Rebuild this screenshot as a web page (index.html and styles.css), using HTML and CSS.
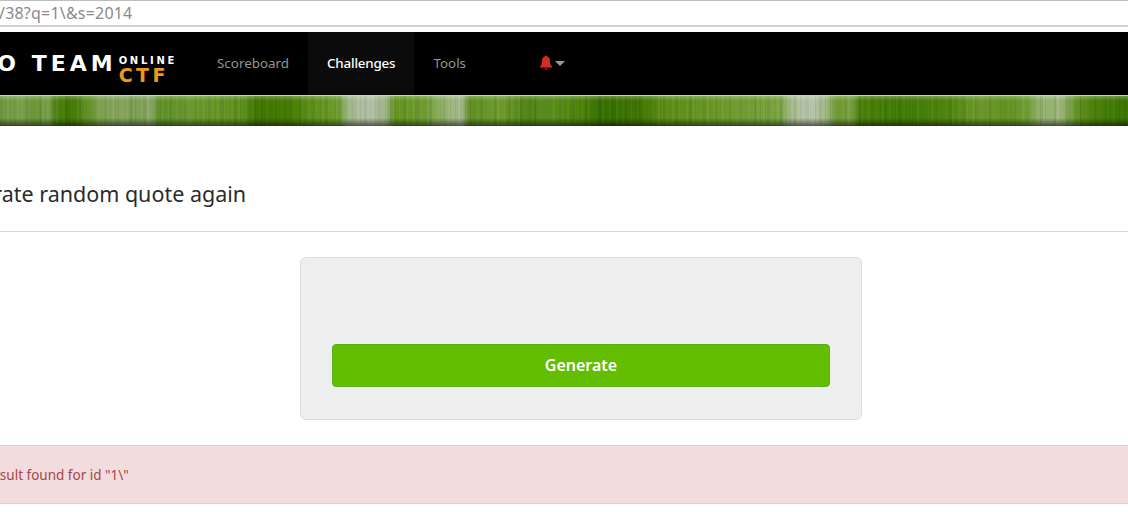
FILE: index.html
```html
<!DOCTYPE html>
<html lang="en">

<head>
    <meta charset="UTF-8">
    <meta name="viewport" content="width=device-width, initial-scale=1.0">
    <title>Generate random quote again</title>

    <link rel="stylesheet" href="styles.css">
</head>

<body class="body">
    <div class="address-bar">
        <span class="address-text">/38?q=1\&amp;s=2014</span>
    </div>

    <nav class="navbar">
        <div class="logo">
            <span class="logo-team">DO TEAM</span>
            <span class="logo-side">
                <span class="logo-online">ONLINE</span>
                <span class="logo-ctf">CTF</span>
            </span>
        </div>
        <ul class="nav-links">
            <li class="nav-item">Scoreboard</li>
            <li class="nav-item active">Challenges</li>
            <li class="nav-item">Tools</li>
        </ul>
        <div class="bell">
            <svg width="14" height="15" viewBox="0 0 14 15">
                <path fill="#d42a2a" d="M7 0.5c.7 0 1.1.5 1.1 1.1C10 2.1 11 3.7 11 6c0 3 .7 4.300 2 5.500v1H1v-1C2.300 10.300 3 9 3 6c0-2.300 1-3.900 2.900-4.400C5.900 1 6.300.5 7 .5z" />
                <path fill="#d42a2a" d="M5.500 13.200h3C8.400 14.100 7.800 14.600 7 14.600s-1.400-.5-1.500-1.400z" />
            </svg>
            <span class="caret"></span>
        </div>
    </nav>

    <div class="stripes"></div>

    <h1 class="page-title">Generate random quote again</h1>

    <div class="well-row">
        <div class="well">
            <button class="btn-generate">Generate</button>
        </div>
    </div>

    <div class="alert">
        <span class="alert-text">No result found for id "1\"</span>
    </div>
</body>

</html>
```

FILE: styles.css
```css
html,
body {
    margin: 0;
    height: 512px;
    overflow: hidden;
    background-color: #fff;
}

body {
    font-family: "Noto Sans", "Open Sans", sans-serif;
    color: #2b2b2b;
}

.address-bar {
    height: 24px;
    border-top: 1px solid #bdbdbd;
    border-bottom: 2px solid #d0d0d0;
    display: flex;
    align-items: center;
    overflow: hidden;
}

.address-text {
    font-size: 16px;
    color: #8a8a8a;
    margin-left: -1px;
    letter-spacing: 0.2px;
}

.navbar {
    margin-top: 5px;
    height: 63px;
    background-color: #000;
    display: flex;
    align-items: stretch;
}

.logo {
    width: 198px;
    flex-shrink: 0;
    display: flex;
    align-items: center;
    justify-content: flex-end;
    padding-right: 21px;
    box-sizing: border-box;
    overflow: hidden;
    white-space: nowrap;
}

.logo-team {
    font-family: "DejaVu Sans", sans-serif;
    font-weight: bold;
    font-size: 22px;
    letter-spacing: 4px;
    color: #fff;
    margin-left: -30px;
}

.logo-side {
    display: flex;
    flex-direction: column;
    margin-left: 2px;
    margin-top: 12px;
    line-height: 1;
}

.logo-online {
    font-family: "DejaVu Sans", sans-serif;
    font-weight: bold;
    font-size: 10px;
    line-height: 11px;
    letter-spacing: 2.700px;
    color: #fff;
}

.logo-ctf {
    font-family: "DejaVu Sans", sans-serif;
    font-weight: bold;
    font-size: 19px;
    line-height: 19px;
    letter-spacing: 3.500px;
    color: #ee9a17;
}

.nav-links {
    list-style: none;
    margin: 0;
    padding: 0;
    display: flex;
}

.nav-item {
    padding: 0 19px 2px;
    display: flex;
    align-items: center;
    font-size: 13.400px;
    color: #949494;
}

.nav-item.active {
    color: #fff;
    font-weight: 500;
    letter-spacing: -0.2px;
    background-color: #0b0b0b;
}

.bell {
    margin-left: 54px;
    display: flex;
    align-items: center;
    gap: 2px;
    padding-bottom: 3px;
}

.caret {
    width: 0;
    height: 0;
    border-left: 5px solid transparent;
    border-right: 5px solid transparent;
    border-top: 5px solid #999;
    margin-top: 2px;
}

.stripes {
    height: 31px;
    border-top: 1px solid #c9d2bd;
    box-sizing: border-box;
    background-image:
        linear-gradient(to bottom, rgba(255, 255, 255, 0.25) 0, rgba(255, 255, 255, 0) 5px, rgba(0, 0, 0, 0) 22px, rgba(0, 0, 0, 0.55) 30px),
        repeating-linear-gradient(to right, rgba(0, 0, 0, 0.05) 0, rgba(0, 0, 0, 0.05) 1px, rgba(0, 0, 0, 0) 1px, rgba(0, 0, 0, 0) 5px),
        repeating-linear-gradient(to right, rgba(255, 255, 255, 0.04) 0, rgba(255, 255, 255, 0.04) 2px, rgba(255, 255, 255, 0) 2px, rgba(255, 255, 255, 0) 7px),
        repeating-linear-gradient(to right, rgba(0, 0, 0, 0.05) 0, rgba(0, 0, 0, 0.05) 3px, rgba(0, 0, 0, 0) 3px, rgba(0, 0, 0, 0) 13px),
        linear-gradient(to right,
            #6f9a3a 0, #79a04a 20px, #6a9636 35px, #78a04a 48px, #4f8410 56px, #3f7800 70px, #5c8d1c 85px, #7ea24f 100px,
            #86a65e 122px, #7a9e4e 135px, #8aa868 150px, #5f9026 160px, #6a9a2e 190px, #659524 220px, #5c8e1c 245px,
            #3f7700 255px, #457c00 290px, #5d8f18 310px, #6d9c2c 338px, #a5b991 350px, #b3c2a6 370px, #a0b58a 385px,
            #64951e 395px, #6f9c30 425px, #8dae62 440px, #a8bc92 460px, #5f9020 470px, #6f9c2c 500px, #4f8414 528px,
            #5c8e1c 550px, #4a8008 585px, #376f00 600px, #3f7500 640px, #5a8c14 660px, #6c9a2a 720px, #74a038 760px,
            #79a540 780px, #a8bc90 792px, #b8c6ae 810px, #a5ba8c 824px, #6c9a2a 838px, #7aa444 850px, #4a8008 860px,
            #417a04 900px, #50860e 950px, #6a9828 975px, #649420 1010px, #72a036 1028px, #93b16c 1040px, #9cb67c 1060px,
            #5f9020 1078px, #4a8008 1095px, #3c7400 1128px);
}

.page-title {
    margin: 0;
    height: 106px;
    box-sizing: border-box;
    padding-top: 54px;
    margin-left: -60px;
    font-size: 21.500px;
    font-weight: 400;
    line-height: 27px;
    color: #2b2b2b;
    white-space: nowrap;
    border-bottom: 1px solid #d8d8d8;
}

.well-row {
    margin-top: 25px;
    margin-left: 300px;
}

.well {
    width: 562px;
    height: 163px;
    box-sizing: border-box;
    background-color: #eeeeee;
    border: 1px solid #dedede;
    border-radius: 6px;
    padding: 86px 31px 0;
}

.btn-generate {
    display: block;
    width: 498px;
    height: 43px;
    padding: 0 0 2px;
    background-color: #63bd00;
    border: 1px solid #55b020;
    border-radius: 4px;
    color: #fff;
    font-family: inherit;
    font-size: 16px;
    font-weight: 600;
}

.alert {
    margin-top: 25px;
    height: 59px;
    box-sizing: border-box;
    background-color: #f2dcde;
    border-top: 1px solid #ebccd1;
    border-bottom: 1px solid #ebccd1;
    display: flex;
    align-items: center;
    white-space: nowrap;
}

.alert-text {
    margin-left: -35px;
    padding-top: 1px;
    font-size: 13.500px;
    color: #a5484a;
}
```
